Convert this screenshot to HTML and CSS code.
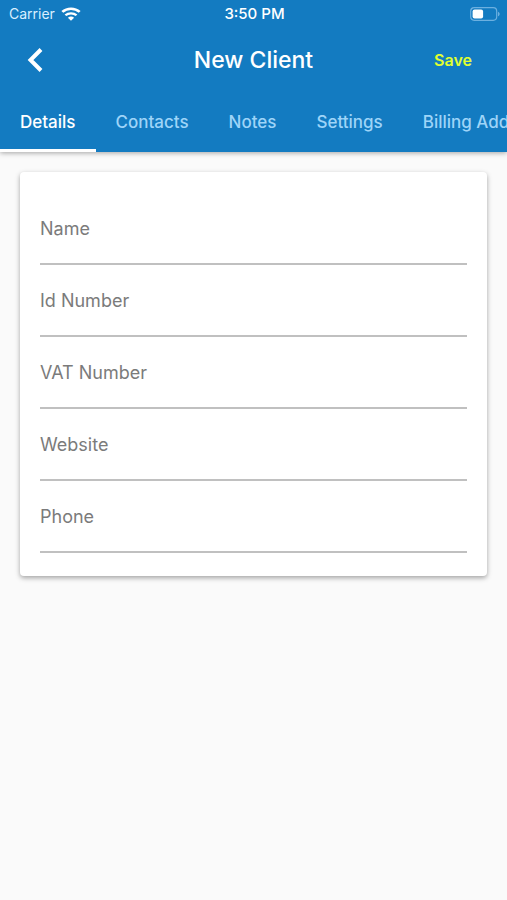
FILE: index.html
```html
<!DOCTYPE html>
<html lang="en">
<head>
  <meta charset="utf-8">
  <meta name="viewport" content="width=device-width, initial-scale=1">
  <title>New Client</title>
  <link rel="stylesheet" href="styles.css">
</head>
<body>
  <header class="header">
    <div class="status">
      <div class="carrier">
        <span>Carrier</span>
        <svg class="wifi" width="20" height="14" viewBox="0 0 18 14" preserveAspectRatio="none" aria-hidden="true">
          <path d="M1.200 4.900a11.200 11.200 0 0 1 15.600 0" fill="none" stroke="currentColor" stroke-width="2.400"/>
          <path d="M4 8.300a7.200 7.200 0 0 1 10 0" fill="none" stroke="currentColor" stroke-width="2.200"/>
          <path d="M6.200 10.800a4 4 0 0 1 5.600 0L9 13.800z" fill="currentColor"/>
        </svg>
      </div>
      <time>3:50 PM</time>
      <svg class="battery" width="30" height="14" viewBox="0 0 30 14" aria-hidden="true">
        <rect x="0.700" y="0.700" width="26" height="12.600" rx="3.500" fill="none" stroke="#6cb0e0" stroke-width="1.200"/>
        <rect x="2.600" y="2.500" width="10.500" height="9" rx="2" fill="#fff"/>
        <path d="M28 4.700c2.200.8 2.200 3.800 0 4.600z" fill="#6cb0e0"/>
      </svg>
    </div>
    <div class="bar">
      <button class="back" type="button" aria-label="Back">
        <svg width="16" height="26" viewBox="0 0 16 26" aria-hidden="true">
          <path d="M14 2.500L3.500 13L14 23.500" fill="none" stroke="currentColor" stroke-width="4"/>
        </svg>
      </button>
      <h1 class="title">New Client</h1>
      <button class="save" type="submit" form="client">Save</button>
    </div>
    <nav class="tabs">
      <a class="tab active" href="#details" aria-current="page">Details</a>
      <a class="tab" href="#contacts">Contacts</a>
      <a class="tab" href="#notes">Notes</a>
      <a class="tab" href="#settings">Settings</a>
      <a class="tab" href="#billing">Billing Address</a>
    </nav>
  </header>
  <main>
    <form class="card" id="client">
      <div class="field"><label for="name">Name</label><input id="name" type="text"></div>
      <div class="field"><label for="idnumber">Id Number</label><input id="idnumber" type="text"></div>
      <div class="field"><label for="vat">VAT Number</label><input id="vat" type="text"></div>
      <div class="field"><label for="website">Website</label><input id="website" type="url"></div>
      <div class="field"><label for="phone">Phone</label><input id="phone" type="tel"></div>
    </form>
  </main>
</body>
</html>
```
FILE: styles.css
```css
* {
  box-sizing: border-box;
}

body {
  margin: 0;
  background: #fafafa;
  font-family: Inter, "Liberation Sans", sans-serif;
}

button {
  border: 0;
  padding: 0;
  background: none;
  font: inherit;
  cursor: pointer;
}

.header {
  background: #137bc1;
  color: #fff;
  box-shadow: 0 1px 5px rgba(0, 0, 0, 0.35);
}

.status {
  display: grid;
  grid-template-columns: 1fr auto 1fr;
  align-items: center;
  height: 27px;
  padding: 0 7px 0 9px;
  font-size: 14px;
}

.status time {
  font-size: 15px;
  font-weight: 500;
}

.carrier {
  display: flex;
  align-items: center;
  gap: 6px;
  color: #d9efff;
}

.wifi {
  color: #fff;
}

.battery {
  justify-self: end;
}

.bar {
  display: grid;
  grid-template-columns: 1fr auto 1fr;
  align-items: center;
  height: 65px;
  padding: 0 27px;
}

.back {
  display: flex;
  justify-self: start;
  color: #fff;
}

.title {
  margin: 0;
  font-size: 23px;
  font-weight: 500;
}

.save {
  justify-self: end;
  padding: 8px;
  color: #e0ff30;
  font-size: 16px;
  font-weight: 600;
}

.tabs {
  display: flex;
  height: 60px;
  overflow: hidden;
}

.tab {
  flex: none;
  padding: 0 20px;
  border-bottom: 3px solid transparent;
  color: #9ed4f8;
  font-size: 17px;
  font-weight: 500;
  line-height: 60px;
  text-decoration: none;
  white-space: nowrap;
}

.tab.active {
  border-bottom-color: #fff;
  color: #fff;
}

.card {
  margin: 20px;
  padding: 21px 20px 23px;
  border-radius: 4px;
  background: #fff;
  box-shadow: 0 2px 5px rgba(0, 0, 0, 0.35);
}

.field {
  display: grid;
  height: 72px;
  border-bottom: 2px solid #c0c0c0;
}

.field label,
.field input {
  grid-area: 1 / 1;
}

.field label {
  color: #7b7b7b;
  font-size: 18px;
  line-height: 72px;
  pointer-events: none;
}

.field input {
  width: 100%;
  border: 0;
  padding: 0;
  outline: 0;
  background: transparent;
  font: inherit;
}
```
